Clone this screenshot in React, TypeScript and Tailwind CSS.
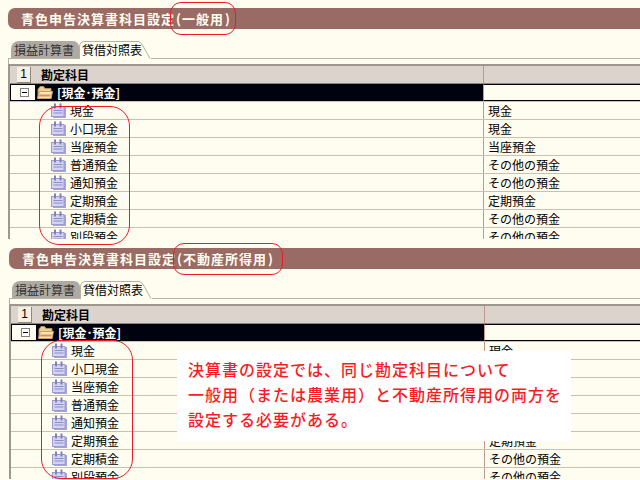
const rows = [
  ["現金", "現金"],
  ["小口現金", "現金"],
  ["当座預金", "当座預金"],
  ["普通預金", "その他の預金"],
  ["通知預金", "その他の預金"],
  ["定期預金", "定期預金"],
  ["定期積金", "その他の預金"],
  ["別段預金", "その他の預金"],
];

const jp = "font-['Noto_Sans_CJK_JP','Noto_Sans_CJK_SC',sans-serif]";

function NoteIcon() {
  return (
    <svg width="15" height="15" viewBox="0 0 15 15" className="shrink-0">
      <rect x="2" y="4" width="13" height="11" fill="#a4a4d8" />
      <rect x="0.5" y="3.5" width="12.5" height="10" fill="#d4d4f2" stroke="#9c9cd0" />
      <path d="M4 0.5V5.5M9.5 0.5V5.5" stroke="#8080bc" strokeWidth="2" />
      <path d="M2.5 7.5h9M2.5 10h9" stroke="#8c8cc8" strokeWidth="1" />
    </svg>
  );
}

function FolderIcon() {
  return (
    <svg width="16" height="15" viewBox="0 0 16 15" className="shrink-0">
      <path d="M1 4.5V13.5H14V3.5H8L6.5 1.5H3L1 4.5Z" fill="#f0d090" stroke="#b89058" />
      <path d="M0.5 13.5L2.5 6.5H15.5L14 13.5Z" fill="#fbe6b8" stroke="#c8a068" />
      <path d="M2.5 9.5H13.5V11.5H2Z" fill="#e08868" />
    </svg>
  );
}

function TabBar() {
  return (
    <div className="flex h-[18px] items-end border-b border-[#b8b0a4] pl-[3px]">
      <div className="flex h-[17px] w-[68px] items-center rounded-tl-lg rounded-tr-md bg-[#aeaaa2] pl-[3px] text-[12px] leading-none text-[#333]">
        損益計算書
      </div>
      <div className="relative -mb-px flex h-[18px] w-[72px] items-center rounded-tl-lg bg-[#fffdf0] pl-[3px] text-[12px] leading-none text-black">
        <svg width="72" height="18" viewBox="0 0 72 18" className="absolute left-0 top-0">
          <path d="M0.5 18V6Q0.5 0.5 6 0.5H59Q62 0.5 64 5L71 17.5" fill="none" stroke="#b8b0a4" />
        </svg>
        <span className="relative">貸借対照表</span>
      </div>
    </div>
  );
}

function Panel({ title, sub }: { title: string; sub: string }) {
  return (
    <section className={`h-[240px] overflow-hidden ${jp}`}>
      <h2 className="flex h-[21px] items-center rounded-l-[7px] bg-[#9a6a64] pl-[13px] text-[13px] font-bold leading-none tracking-[1px] text-[#fffdf0]">
        {title}
        <span className="ml-[1px]">(</span>
        {sub}
        <span className="ml-[1px]">)</span>
      </h2>
      <div className="mt-[12px]">
        <TabBar />
      </div>
      <div className="h-[5px] border-l border-[#b8b0a4]" />
      <div className="h-[175px] overflow-hidden border-l-2 border-t-2 border-[#9c9890]">
        <div className="flex h-[18px] border-b border-[#8c8880] bg-[#dcd4cc]">
          <div className="flex w-[473px] items-center pl-[7px]">
            <span className="flex h-[16px] w-[14px] items-center justify-center border-b border-r border-[#8c8880] bg-[#f4f0e4] font-['Liberation_Sans',sans-serif] text-[12px] leading-none text-black">
              1
            </span>
            <span className="ml-[10px] text-[12px] font-bold leading-none text-black">勘定科目</span>
          </div>
          <div className="flex-1 border-l border-[#c09890]" />
        </div>
        <div className="flex h-[17px]">
          <div className="flex w-[473px] items-center bg-[#000210] pl-px">
            <div className="flex h-[15px] w-[24px] items-center justify-center bg-[#fffdf0] pl-[3px]">
              <span className="flex h-[9px] w-[9px] items-center justify-center border border-[#808080] bg-white">
                <span className="h-px w-[5px] bg-black" />
              </span>
            </div>
            <span className="ml-[2px]">
              <FolderIcon />
            </span>
            <span className="ml-[4px] text-[12px] font-bold leading-none text-white">[現金･預金]</span>
          </div>
          <div className="flex-1 border-y border-l border-black border-l-[#c09890] bg-[#fffdf0]" />
        </div>
        {rows.map(([name, group]) => (
          <div key={name} className="flex h-[18px] border-t border-[#c8c0b0] first:h-[18px] first:border-t-0 first:pt-px">
            <div className="flex w-[473px] items-center gap-[4px] pl-[41px] text-[12px] leading-none text-black">
              <NoteIcon />
              {name}
            </div>
            <div className="flex flex-1 items-center border-l border-[#c09890] pl-[4px] text-[12px] leading-none text-black">
              {group}
            </div>
          </div>
        ))}
      </div>
    </section>
  );
}

function Oval({ className }: { className: string }) {
  return <div className={`absolute border border-[#f01828] ${className}`} />;
}

export default function App() {
  return (
    <div className="relative h-[480px] w-[640px] overflow-hidden bg-[#fffdf0] pt-[8px]">
      <div className="pl-[8px]">
        <Panel title="青色申告決算書科目設定" sub="一般用" />
      </div>
      <div className="pl-[9px]">
        <Panel title="青色申告決算書科目設定" sub="不動産所得用" />
      </div>

      <Oval className="left-[170px] top-[2px] h-[33px] w-[66px] rounded-[11px]" />
      <Oval className="left-[39px] top-[106px] h-[139px] w-[91px] rounded-[20px]" />
      <Oval className="left-[173px] top-[243px] h-[32px] w-[110px] rounded-[11px]" />
      <Oval className="left-[41px] top-[340px] h-[139px] w-[92px] rounded-[20px]" />

      <div className={`absolute left-[177px] top-[351px] h-[90px] w-[394px] bg-white pl-[11px] pt-[6px] text-[16px] font-medium leading-[25px] tracking-[1px] text-[#f81c24] ${jp}`}>
        <p>決算書の設定では、同じ勘定科目について</p>
        <p>一般用（または農業用）と不動産所得用の両方を</p>
        <p>設定する必要がある。</p>
      </div>
    </div>
  );
}
